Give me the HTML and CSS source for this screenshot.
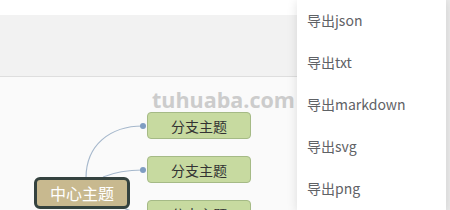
FILE: index.html
```html
<!DOCTYPE html>
<html lang="zh">
<head>
<meta charset="utf-8">
<link rel="stylesheet" href="styles.css">
</head>
<body>
<div class="app">
  <div class="topbar"></div>
  <div class="toolbar"></div>
  <div class="canvas">
    <div class="watermark">tuhuaba.com</div>
    <svg class="links" width="300" height="134" viewBox="0 77 300 134">
      <path d="M86 178 C 86 145, 110 126, 143 126" />
      <path d="M103 177 C 115 172, 125 170, 143 170" />
      <path d="M120 206 C 128 210, 133 213, 143 214" />
      <circle cx="143" cy="126" r="3" />
      <circle cx="143" cy="170" r="3" />
    </svg>
    <div class="node branch b1">分支主题</div>
    <div class="node branch b2">分支主题</div>
    <div class="node branch b3">分支主题</div>
    <div class="node root">中心主题</div>
  </div>
  <div class="rail"></div>
</div>
<ul class="menu">
  <li class="menu-item">导出json</li>
  <li class="menu-item">导出txt</li>
  <li class="menu-item">导出markdown</li>
  <li class="menu-item">导出svg</li>
  <li class="menu-item">导出png</li>
</ul>
</body>
</html>
```

FILE: styles.css
```css
html, body {
  margin: 0;
  padding: 0;
  width: 450px;
  height: 210px;
  overflow: hidden;
  font-family: "Noto Sans CJK SC", "Noto Sans", sans-serif;
}

.app {
  position: relative;
  width: 450px;
  height: 210px;
  display: flex;
  flex-direction: column;
  background: #fafafa;
}

.topbar {
  height: 15px;
  background: #ffffff;
}

.toolbar {
  height: 61px;
  background: #f2f2f2;
  border-bottom: 1px solid #dedede;
  box-shadow: 0 1px 0 #ececec;
}

.canvas {
  position: relative;
  flex: 1;
  background: #fafafa;
}

.rail {
  position: absolute;
  top: 0;
  right: 0;
  width: 4px;
  height: 210px;
  background: #ebebeb;
}

.watermark {
  position: absolute;
  left: 152px;
  top: 9px;
  font-family: "Open Sans", "Liberation Sans", sans-serif;
  font-weight: 700;
  font-size: 21.5px;
  line-height: 27px;
  color: #cccccc;
}

.links {
  position: absolute;
  left: 0;
  top: 0;
}

.links path {
  fill: none;
  stroke: #a6b8cc;
  stroke-width: 1.2;
}

.links circle {
  fill: #7f9dc2;
}

.node {
  position: absolute;
  box-sizing: border-box;
  display: flex;
  align-items: center;
  justify-content: center;
}

.branch {
  left: 147px;
  width: 104px;
  height: 27px;
  background: #c7daa0;
  border: 1px solid #a5ba86;
  border-radius: 4px;
  font-size: 14px;
  color: #333333;
}

.b1 { top: 35px; }
.b2 { top: 79px; }
.b3 { top: 123px; }

.root {
  left: 34px;
  top: 100px;
  width: 96px;
  height: 32px;
  background: #c8b98f;
  border: 3px solid #34423f;
  border-radius: 6px;
  font-size: 16px;
  color: #ffffff;
}

.menu {
  position: absolute;
  left: 297px;
  top: -1px;
  width: 149px;
  height: 211px;
  margin: 0;
  padding: 0;
  list-style: none;
  background: #ffffff;
  box-shadow: 0 2px 10px rgba(0, 0, 0, 0.12);
}

.menu-item {
  height: 42px;
  line-height: 42px;
  padding-left: 10px;
  font-size: 14px;
  color: #5f6266;
}
```
